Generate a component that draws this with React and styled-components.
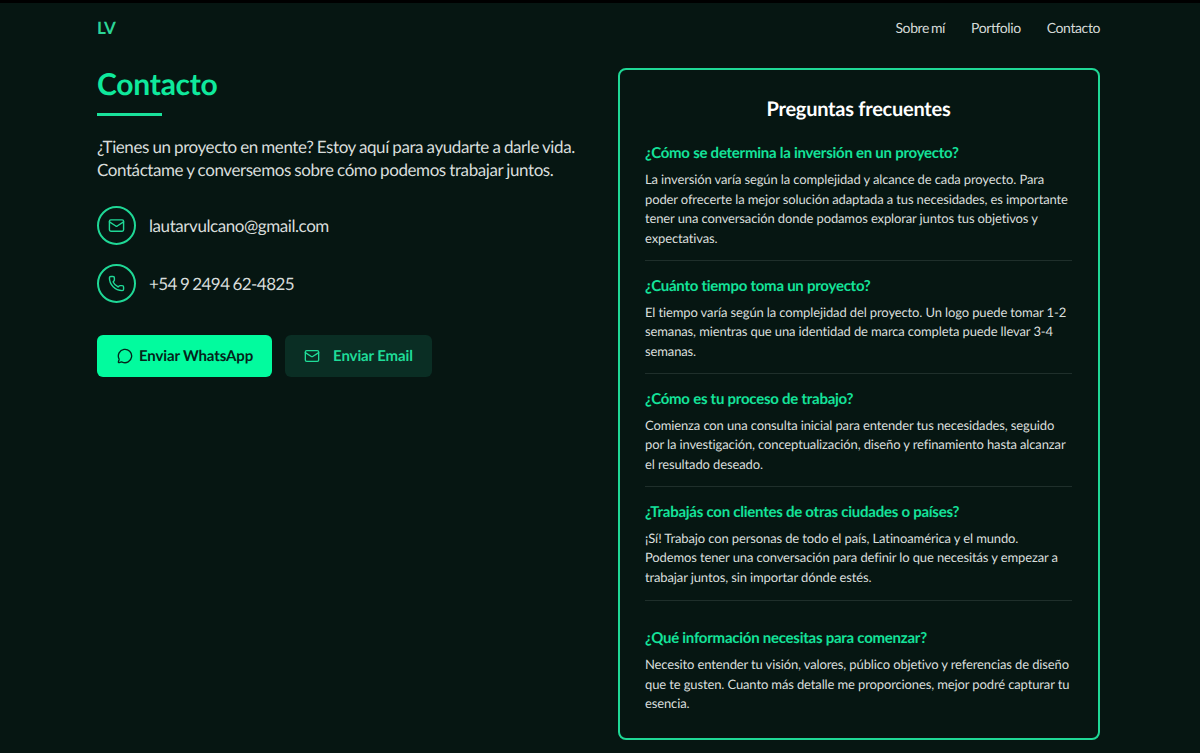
import React from "react";
import styled, { createGlobalStyle } from "styled-components";
import { Mail, Phone, MessageCircle } from "lucide-react";

const Global = createGlobalStyle`
  html, body { margin: 0; padding: 0; background: #061612; }
  body { font-family: "Lato", "Noto Sans", sans-serif; color: #e4e8e6; text-rendering: geometricPrecision; }
  * { box-sizing: border-box; }
`;
const Page = styled.div`
  height: 753px;
  overflow: hidden;
  border-top: 3px solid #000;
  background: #061612;
`;
const Nav = styled.header`
  height: 49px;
  padding: 0 100px 0 97px;
  display: flex;
  align-items: center;
  justify-content: space-between;
`;
const Brand = styled.div`
  font-size: 17px;
  font-weight: 700;
  letter-spacing: -0.3px;
  color: #2bd597;
`;
const NavLinks = styled.nav`
  display: flex;
  gap: 26px;
`;
const NavLink = styled.a`
  font-size: 14px;
  letter-spacing: -0.4px;
  word-spacing: -1.2px;
  color: #d5dad8;
`;
const Main = styled.main`
  padding: 16px 100px 0 97px;
  display: grid;
  grid-template-columns: 1fr 482px;
  gap: 40px;
  align-items: start;
`;
const Left = styled.section`
  display: flex;
  flex-direction: column;
`;
const Title = styled.h1`
  margin: 0;
  font-size: 30px;
  line-height: 33px;
  font-weight: 700;
  letter-spacing: -0.25px;
  color: #0fe99c;
`;
const Rule = styled.div`
  width: 65px;
  height: 3px;
  margin-top: 12px;
  background: #19e29b;
`;
const Intro = styled.p`
  margin: 19px 0 0;
  font-size: 17px;
  line-height: 23px;
  letter-spacing: -0.42px;
  word-spacing: -0.45px;
  color: #d8dddb;
`;
const ContactList = styled.div`
  margin-top: 25px;
  display: flex;
  flex-direction: column;
  gap: 19px;
`;
const ContactRow = styled.div`
  display: flex;
  align-items: center;
  gap: 13px;
  font-size: 17px;
  letter-spacing: ${(p) => (p.$digits ? "-0.55px" : "-0.43px")};
  word-spacing: -0.8px;
  color: #d8dddb;
`;
const IconRing = styled.span`
  width: 39px;
  height: 39px;
  border: 2px solid #1fd896;
  border-radius: 50%;
  display: flex;
  align-items: center;
  justify-content: center;
  color: #1fd896;
`;
const Actions = styled.div`
  margin-top: 32px;
  display: flex;
  gap: 13px;
`;
const Button = styled.a`
  height: 42px;
  padding: 0 19px 0 ${(p) => (p.$primary ? "20px" : "19px")};
  display: flex;
  align-items: center;
  gap: ${(p) => (p.$primary ? "6px" : "13px")};
  border-radius: 6px;
  font-size: 15px;
  font-weight: 700;
  letter-spacing: -0.13px;
  background: ${(p) => (p.$primary ? "#02fb9e" : "#0a2e24")};
  color: ${(p) => (p.$primary ? "#04241a" : "#1fdc98")};
`;
const Card = styled.aside`
  height: 672px;
  border: 2px solid #1fd896;
  border-radius: 8px;
  padding: 26px 26px 0 25px;
`;
const CardTitle = styled.h2`
  margin: 0 0 21px;
  text-align: center;
  font-size: 20px;
  line-height: 26px;
  font-weight: 700;
  letter-spacing: -0.25px;
  color: #fff;
`;
const Item = styled.div`
  padding-bottom: 12px;
  margin-bottom: 14.5px;
  border-bottom: ${(p) => (p.$last ? "none" : "1px solid #1f2f2b")};
  &:nth-of-type(4) { padding-bottom: 13px; margin-bottom: 27px; }
`;
const Question = styled.h3`
  margin: 0 0 7px;
  font-size: 15px;
  line-height: 20px;
  font-weight: 700;
  letter-spacing: -0.25px;
  color: #14e39a;
`;
const Answer = styled.p`
  margin: 0;
  font-size: 13px;
  line-height: 19.5px;
  letter-spacing: -0.125px;
  color: #d9dedc;
`;

const faqs = [
  ["¿Cómo se determina la inversión en un proyecto?", "La inversión varía según la complejidad y alcance de cada proyecto. Para poder ofrecerte la mejor solución adaptada a tus necesidades, es importante tener una conversación donde podamos explorar juntos tus objetivos y expectativas."],
  ["¿Cuánto tiempo toma un proyecto?", "El tiempo varía según la complejidad del proyecto. Un logo puede tomar 1-2 semanas, mientras que una identidad de marca completa puede llevar 3-4 semanas."],
  ["¿Cómo es tu proceso de trabajo?", "Comienza con una consulta inicial para entender tus necesidades, seguido por la investigación, conceptualización, diseño y refinamiento hasta alcanzar el resultado deseado."],
  ["¿Trabajás con clientes de otras ciudades o países?", "¡Sí! Trabajo con personas de todo el país, Latinoamérica y el mundo. Podemos tener una conversación para definir lo que necesitás y empezar a trabajar juntos, sin importar dónde estés."],
  ["¿Qué información necesitas para comenzar?", "Necesito entender tu visión, valores, público objetivo y referencias de diseño que te gusten. Cuanto más detalle me proporciones, mejor podré capturar tu esencia."],
];

export default function App() {
  return (
    <Page>
      <Global />
      <Nav>
        <Brand>LV</Brand>
        <NavLinks>
          <NavLink>Sobre mí</NavLink>
          <NavLink>Portfolio</NavLink>
          <NavLink>Contacto</NavLink>
        </NavLinks>
      </Nav>
      <Main>
        <Left>
          <Title>Contacto</Title>
          <Rule />
          <Intro>
            ¿Tienes un proyecto en mente? Estoy aquí para ayudarte a darle vida. Contáctame y conversemos sobre cómo podemos trabajar juntos.
          </Intro>
          <ContactList>
            <ContactRow>
              <IconRing><Mail size={17} strokeWidth={2} /></IconRing>
              lautarvulcano@gmail.com
            </ContactRow>
            <ContactRow $digits>
              <IconRing><Phone size={17} strokeWidth={2} /></IconRing>
              +54 9 2494 62-4825
            </ContactRow>
          </ContactList>
          <Actions>
            <Button $primary><MessageCircle size={16} strokeWidth={2} />Enviar WhatsApp</Button>
            <Button><Mail size={16} strokeWidth={2} />Enviar Email</Button>
          </Actions>
        </Left>
        <Card>
          <CardTitle>Preguntas frecuentes</CardTitle>
          {faqs.map(([q, a], i) => (
            <Item key={q} $last={i === faqs.length - 1}>
              <Question>{q}</Question>
              <Answer>{a}</Answer>
            </Item>
          ))}
        </Card>
      </Main>
    </Page>
  );
}
